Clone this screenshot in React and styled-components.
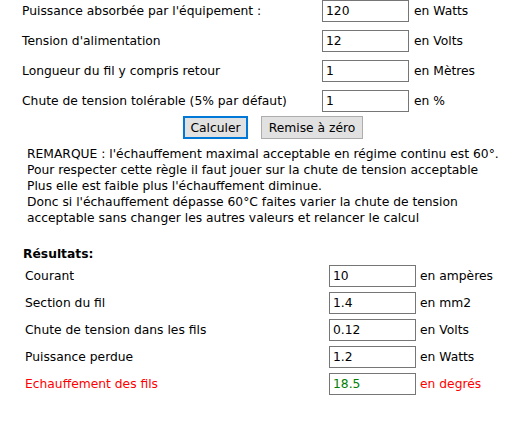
import React from "react";
import styled, { createGlobalStyle } from "styled-components";

const Global = createGlobalStyle`
  body {
    margin: 0;
    background: #ffffff;
    font-family: "DejaVu Sans", Verdana, sans-serif;
    font-size: 12.3px;
    color: #000000;
  }
`;

const Page = styled.div`
  width: 526px;
  display: flex;
  flex-direction: column;
`;

const Table = styled.div`
  display: grid;
  grid-template-columns: ${({ $label }) => $label}px 87px auto;
  row-gap: ${({ $gap }) => $gap}px;
  align-items: center;
  padding-left: ${({ $left }) => $left}px;
  margin-top: ${({ $top }) => $top}px;
`;

const Label = styled.span`
  color: ${({ $red }) => ($red ? "#ff0000" : "#000000")};
  white-space: nowrap;
`;

const Field = styled.input`
  box-sizing: border-box;
  width: 87px;
  height: 22px;
  border: 1px solid #767676;
  padding: 0 3px;
  font-family: inherit;
  font-size: 12.3px;
  color: ${({ $green }) => ($green ? "#008000" : "#000000")};
  background: #ffffff;
  outline: none;
`;

const Unit = styled.span`
  padding-left: ${({ $pad }) => $pad}px;
  color: ${({ $red }) => ($red ? "#ff0000" : "#000000")};
  white-space: nowrap;
`;

const Actions = styled.div`
  display: flex;
  gap: 13px;
  padding-left: 183px;
  margin-top: 4px;
`;

const Button = styled.button`
  box-sizing: border-box;
  width: ${({ $w }) => $w}px;
  height: 23px;
  padding: 0;
  font-family: inherit;
  font-size: 12.3px;
  color: #000000;
  background: #e1e1e1;
  border: ${({ $primary }) => ($primary ? "2px solid #0078d7" : "1px solid #adadad")};
  white-space: nowrap;
`;

const Note = styled.p`
  margin: 7px 0 0 27px;
  line-height: 16px;
`;

const Heading = styled.div`
  font-weight: bold;
  margin: 21px 0 0 23px;
`;

const inputs = [
  ["Puissance absorbée par l'équipement :", "120", "en Watts"],
  ["Tension d'alimentation", "12", "en Volts"],
  ["Longueur du fil y compris retour", "1", "en Mètres"],
  ["Chute de tension tolérable (5% par défaut)", "1", "en %"],
];

const results = [
  ["Courant", "10", "en ampères"],
  ["Section du fil", "1.4", "en mm2"],
  ["Chute de tension dans les fils", "0.12", "en Volts"],
  ["Puissance perdue", "1.2", "en Watts"],
  ["Echauffement des fils", "18.5", "en degrés", true],
];

export default function App() {
  return (
    <Page>
      <Global />
      <Table $label={300} $gap={8} $left={22} $top={0}>
        {inputs.map(([label, value, unit]) => (
          <React.Fragment key={label}>
            <Label>{label}</Label>
            <Field defaultValue={value} />
            <Unit $pad={5}>{unit}</Unit>
          </React.Fragment>
        ))}
      </Table>
      <Actions>
        <Button $primary $w={65}>Calculer</Button>
        <Button $w={102}>Remise à zéro</Button>
      </Actions>
      <Note>
        REMARQUE : l'échauffement maximal acceptable en régime continu est 60°.
        <br />
        Pour respecter cette règle il faut jouer sur la chute de tension acceptable
        <br />
        Plus elle est faible plus l'échauffement diminue.
        <br />
        Donc si l'échauffement dépasse 60°C faites varier la chute de tension
        <br />
        acceptable sans changer les autres valeurs et relancer le calcul
      </Note>
      <Heading>Résultats:</Heading>
      <Table $label={304} $gap={5} $left={25} $top={4}>
        {results.map(([label, value, unit, hot]) => (
          <React.Fragment key={label}>
            <Label $red={hot}>{label}</Label>
            <Field defaultValue={value} $green={hot} readOnly />
            <Unit $pad={4} $red={hot}>{unit}</Unit>
          </React.Fragment>
        ))}
      </Table>
    </Page>
  );
}
